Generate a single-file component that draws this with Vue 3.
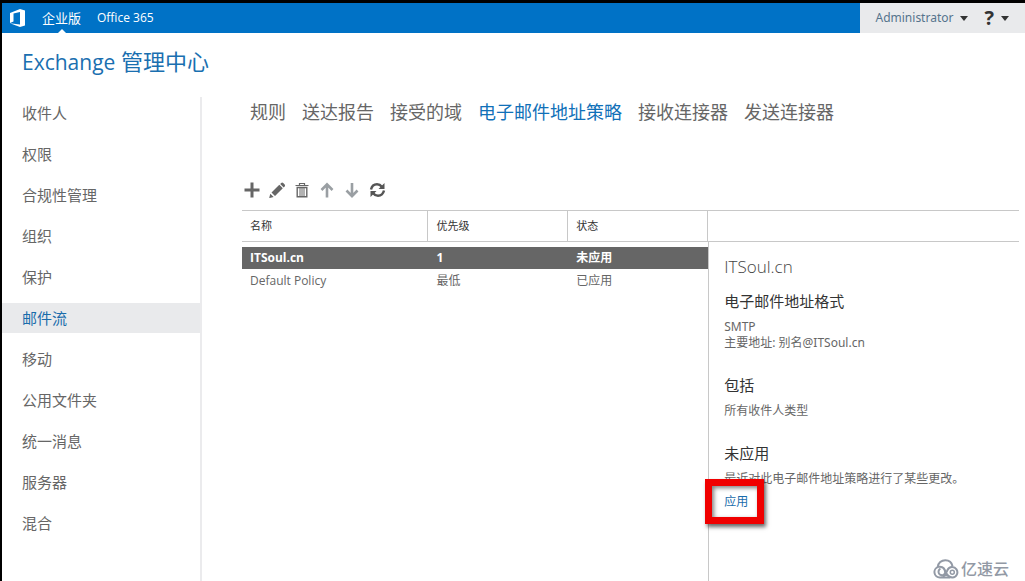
<script setup>
import { ref } from 'vue'

const sections = ['收件人', '权限', '合规性管理', '组织', '保护', '邮件流', '移动', '公用文件夹', '统一消息', '服务器', '混合']
const activeSection = ref('邮件流')

const tabs = ['规则', '送达报告', '接受的域', '电子邮件地址策略', '接收连接器', '发送连接器']
const activeTab = ref('电子邮件地址策略')

const policies = [
  { name: 'ITSoul.cn', priority: '1', status: '未应用' },
  { name: 'Default Policy', priority: '最低', status: '已应用' },
]
const selected = ref('ITSoul.cn')
</script>

<template>
  <div class="page">
    <header class="topbar">
      <svg class="logo" viewBox="0 0 16 18" aria-hidden="true">
        <path fill="#fff" fill-rule="evenodd" d="M0 4 10 0l5 1.500v15L10 18 0 14.300l10 1.200V3L3.500 4.600v8L0 14z" />
      </svg>
      <nav class="suite">
        <a href="#" class="suite-link current">企业版</a>
        <a href="#" class="suite-link">Office 365</a>
      </nav>
      <div class="account">
        <button type="button" class="menu user">Administrator<i class="caret"></i></button>
        <button type="button" class="menu help" aria-label="帮助"><b>?</b><i class="caret"></i></button>
      </div>
    </header>

    <h1 class="title"><span class="product">Exchange</span> 管理中心</h1>

    <div class="body">
      <nav class="sidebar">
        <a
          v-for="item in sections"
          :key="item"
          href="#"
          class="section"
          :class="{ active: item === activeSection }"
          @click.prevent="activeSection = item"
        >{{ item }}</a>
      </nav>

      <main class="main">
        <nav class="tabs">
          <a
            v-for="tab in tabs"
            :key="tab"
            href="#"
            class="tab"
            :class="{ active: tab === activeTab }"
            @click.prevent="activeTab = tab"
          >{{ tab }}</a>
        </nav>

        <div class="toolbar">
          <button type="button" class="tool" aria-label="新建">
            <svg viewBox="0 0 18 18"><path d="M9 1.500v15M1.500 9h15" stroke="#666" stroke-width="3" /></svg>
          </button>
          <button type="button" class="tool" aria-label="编辑">
            <svg viewBox="0 0 18 18" fill="#666"><path d="m3.500 11.500 7.800-7.700 3.500 3.500L7 15zM12.200 2.900l1-1q1-.8 2 0l1.500 1.500q.8 1 0 2l-1 1zM2.300 12.700l3.400 3.300-4 .9q-.5 0-.4-.5z" /></svg>
          </button>
          <button type="button" class="tool" aria-label="删除">
            <svg viewBox="0 0 18 18" fill="none" stroke="#666"><path d="M2.500 4.500h13M6.500 4V2.500h5V4" stroke-width="1.200" /><path d="M4.200 6.500v9.300h9.600V6.500z" stroke-width="1.400" /><path d="M7 7v8M9 7v8M11 7v8" stroke-width="1" /></svg>
          </button>
          <button type="button" class="tool" aria-label="上移">
            <svg viewBox="0 0 18 18" fill="none" stroke="#9a9fa3" stroke-width="2.600"><path d="M9 16.500V4M3.500 9 9 3.300 14.500 9" /></svg>
          </button>
          <button type="button" class="tool" aria-label="下移">
            <svg viewBox="0 0 18 18" fill="none" stroke="#9a9fa3" stroke-width="2.600"><path d="M9 2v12.500M3.500 9.500 9 15.200l5.500-5.700" /></svg>
          </button>
          <button type="button" class="tool" aria-label="刷新">
            <svg viewBox="0 0 18 18"><g fill="none" stroke="#555" stroke-width="2.400"><path d="M3 8.500Q4.200 3.300 9 3.300q3 0 4.800 2.500" /><path d="M16 9.500Q14.800 14.700 10 14.700q-3 0-4.800-2.500" /></g><path fill="#555" d="M16.500 2v6h-6zM2.500 16v-6h6z" /></svg>
          </button>
        </div>

        <div class="content">
          <table class="list">
            <thead>
              <tr><th class="wide">名称</th><th>优先级</th><th>状态</th></tr>
            </thead>
            <tbody>
              <tr class="spacer" aria-hidden="true"><td colspan="3"></td></tr>
              <tr
                v-for="policy in policies"
                :key="policy.name"
                class="row"
                :class="{ selected: policy.name === selected }"
                @click="selected = policy.name"
              >
                <td>{{ policy.name }}</td>
                <td>{{ policy.priority }}</td>
                <td>{{ policy.status }}</td>
              </tr>
            </tbody>
          </table>

          <div class="side">
            <div class="side-head"></div>
            <section class="details">
              <h2>ITSoul.cn</h2>
              <h3>电子邮件地址格式</h3>
              <p>SMTP<br />主要地址: 别名@ITSoul.cn</p>
              <h3>包括</h3>
              <p>所有收件人类型</p>
              <h3>未应用</h3>
              <p>最近对此电子邮件地址策略进行了某些更改。</p>
              <a href="#" class="apply">应用<span class="marker"></span></a>
            </section>
          </div>
        </div>
      </main>
    </div>

    <div class="watermark">
      <svg viewBox="0 0 26 20" fill="none" stroke="#9299a5" stroke-width="2" aria-hidden="true">
        <path d="M17 18.500H7A5.400 5.400 0 1 1 11.800 11a3.400 3.400 0 1 1-4.300-1.300" />
        <path d="M4.800 8C5 4 8.500 1.200 12.300 1.200c3.500 0 6.500 2.300 7.200 6" />
        <path d="M11.500 11c1.500 2.500 2.300 7.500 8 7.500a5.200 5.200 0 1 0-5-7.500c-1.500 3.500-2 5.500-4.500 7" />
        <circle cx="19.300" cy="13.300" r="2" stroke-width="1.500" />
      </svg>
      <span>亿速云</span>
    </div>
  </div>
</template>

<style>
body {
  margin: 0;
}
</style>

<style scoped>
.page {
  position: relative;
  box-sizing: border-box;
  min-height: 100vh;
  display: flex;
  flex-direction: column;
  border-top: 3px solid #000;
  border-left: 2px solid #000;
  background: #fff;
  color: #666;
  font: 12px/16px "Noto Sans", "Noto Sans CJK SC", sans-serif;
}
a {
  color: inherit;
  text-decoration: none;
}
button {
  border: 0;
  padding: 0;
  background: none;
  color: inherit;
  font: inherit;
  cursor: pointer;
}
h1, h2, h3, p {
  margin: 0;
  font-weight: 400;
}
.topbar {
  display: flex;
  align-items: center;
  height: 30px;
  padding-left: 8px;
  background: #0072c6;
  color: #fff;
}
.logo {
  width: 16px;
  height: 18px;
}
.suite {
  display: flex;
  align-self: stretch;
  gap: 16px;
  margin-left: 16px;
  font-family: "Open Sans", "Noto Sans CJK SC", sans-serif;
}
.suite-link {
  position: relative;
  line-height: 30px;
}
.suite-link.current {
  font-size: 13px;
}
.current::after {
  content: "";
  position: absolute;
  left: 50%;
  bottom: 0;
  margin-left: -4px;
  border: 4px solid transparent;
  border-top: 0;
  border-bottom-color: #fff;
}
.account {
  display: flex;
  align-self: stretch;
  box-sizing: border-box;
  gap: 16px;
  margin-left: auto;
  padding: 0 16px;
  background: #e9eaec;
}
.menu {
  display: flex;
  align-items: center;
  gap: 7px;
}
.user {
  color: #56748c;
}
.help b {
  color: #333;
  font: 700 20px/30px "Open Sans", sans-serif;
}
.caret {
  border: 4px solid transparent;
  border-top: 5px solid #333;
  border-bottom: 0;
}
.title {
  padding: 12px 20px 0;
  color: #1a6fb0;
  font: 22px/32px "Open Sans", "Noto Sans CJK SC", sans-serif;
}
.product {
  font-size: 21px;
}
.body {
  flex: 1;
  display: flex;
  margin-top: 19px;
}
.sidebar {
  display: flex;
  flex-direction: column;
  gap: 11px;
  flex: 0 0 198px;
  padding-top: 1px;
  border-right: 2px solid #ebebed;
}
.section {
  padding-left: 20px;
  font-size: 15px;
  line-height: 30px;
}
.section.active {
  background: #e9eaec;
  color: #1a6cab;
}
.main {
  flex: 1;
  display: flex;
  flex-direction: column;
  min-width: 0;
  padding: 0 6px 0 40px;
}
.tabs {
  display: flex;
  gap: 16px;
  padding-left: 8px;
  font-size: 18px;
  line-height: 30px;
  white-space: nowrap;
}
.tab.active {
  color: #1070b8;
}
.toolbar {
  display: flex;
  gap: 5px;
  margin: 53px 0 10px;
}
.tool {
  display: grid;
  place-items: center;
  width: 20px;
  height: 20px;
}
.tool svg {
  width: 18px;
  height: 18px;
}
.content {
  flex: 1;
  display: grid;
  grid-template-columns: 3fr 2fr;
}
.list {
  align-self: start;
  width: 100%;
  border-collapse: separate;
  border-spacing: 0;
  table-layout: fixed;
}
th {
  box-sizing: border-box;
  height: 32px;
  padding: 0 8px;
  border-top: 1px solid #c8c8c8;
  border-bottom: 1px solid #c8c8c8;
  background: linear-gradient(#c8c8c8, #c8c8c8) right / 1px 100% no-repeat;
  color: #333;
  font-size: 11px;
  font-weight: 400;
  text-align: left;
}
th.wide {
  width: 40%;
}
.spacer td {
  height: 5px;
  padding: 0;
}
.row td {
  height: 24px;
  padding: 0 8px;
  font-family: "Open Sans", "Noto Sans CJK SC", sans-serif;
}
.row.selected td {
  height: 22px;
  background: #666;
  color: #fff;
  font-weight: 700;
}
.side {
  display: flex;
  flex-direction: column;
}
.side-head {
  box-sizing: border-box;
  height: 32px;
  border-top: 1px solid #c8c8c8;
  border-bottom: 1px solid #c8c8c8;
}
.details {
  flex: 1;
  padding: 13px 0 0 15px;
  border-left: 1px solid #c8c8c8;
}
h2 {
  color: #444;
  font: 300 17px/24px "Open Sans", sans-serif;
}
h3 {
  margin-bottom: 7px;
  color: #333;
  font-size: 15px;
  line-height: 22px;
}
h2 + h3 {
  margin-top: 11px;
}
p + h3 {
  margin-top: 23px;
}
.apply {
  position: relative;
  display: inline-block;
  margin-top: 7px;
  color: #1a6cab;
}
.marker {
  position: absolute;
  inset: -15px -16px -14px -19px;
  border: 7px solid #f00000;
  box-shadow: 2px 3px 4px rgba(0, 0, 0, 0.6), inset 2px 2px 4px rgba(0, 0, 0, 0.5);
  pointer-events: none;
}
.watermark {
  position: absolute;
  right: 16px;
  bottom: 0;
  display: flex;
  align-items: center;
  gap: 2px;
  color: #9299a5;
  font-size: 16px;
  font-weight: 500;
  line-height: 24px;
}
.watermark svg {
  width: 26px;
  height: 20px;
}
</style>
